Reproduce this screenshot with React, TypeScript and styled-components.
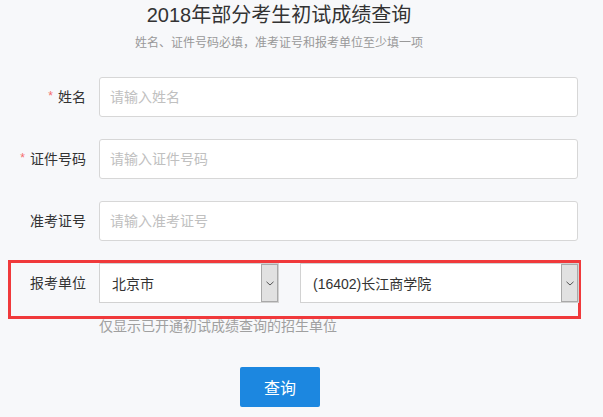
import styled, { createGlobalStyle } from "styled-components";

const GlobalStyle = createGlobalStyle`
  html, body {
    margin: 0;
    padding: 0;
    background: #f7f8fa;
  }
  body {
    font-family: "Liberation Sans", "Noto Sans CJK SC", sans-serif;
    color: #333;
  }
  * {
    box-sizing: border-box;
  }
`;

const Page = styled.div`
  width: 603px;
  height: 417px;
  overflow: hidden;
  background: #f7f8fa;
`;

const Header = styled.div`
  width: 558px;
  text-align: center;
`;

const Title = styled.h1`
  margin: 0;
  font-size: 20px;
  font-weight: 400;
  line-height: 30px;
  color: #333;
`;

const Subtitle = styled.p`
  margin: 4px 0 0 0;
  font-size: 12px;
  line-height: 18px;
  color: #999;
`;

const Form = styled.form`
  margin-top: 25px;
  display: flex;
  flex-direction: column;
  gap: 22px;
`;

const Row = styled.div<{ $labelWidth?: number }>`
  display: flex;
  align-items: center;
  height: 40px;
  gap: 13px;

  & > label {
    flex: 0 0 ${(p) => p.$labelWidth ?? 86}px;
  }
`;

const Label = styled.label`
  text-align: right;
  font-size: 14px;
  line-height: 20px;
  color: #333;
  white-space: nowrap;
`;

const Star = styled.span`
  color: #f56c6c;
  font-size: 12px;
  margin-right: 5px;
  position: relative;
  top: -2px;
`;

const Input = styled.input`
  width: 479px;
  height: 40px;
  padding: 0 10px;
  border: 1px solid #d7d7d7;
  border-radius: 3px;
  background: #fff;
  font-family: inherit;
  font-size: 14px;
  color: #333;
  outline: none;
  &::placeholder {
    color: #c0c0c0;
  }
`;

const UnitGroup = styled.div`
  display: flex;
  flex-direction: column;
`;

const Highlight = styled.div`
  margin: -3px 0 0 8px;
  width: 573px;
  border: 3px solid #f0393b;
  padding-bottom: 13px;
`;

const Fields = styled.div`
  display: flex;
  gap: 21px;
`;

const SelectBox = styled.div<{ $width: number }>`
  width: ${(p) => p.$width}px;
  height: 40px;
  display: flex;
  align-items: stretch;
  border: 1px solid #d2d2d2;
  background: #fff;
  font-size: 14px;
  color: #333;
`;

const SelectValue = styled.span`
  flex: 1;
  display: flex;
  align-items: center;
  padding-left: 12px;
  white-space: nowrap;
`;

const ArrowBox = styled.span`
  flex: 0 0 17px;
  display: flex;
  align-items: center;
  justify-content: center;
  background: #e1e1e1;
  border: 1px solid #a9a9a9;
`;

const Hint = styled.p`
  margin: -1px 0 0 0;
  padding-left: 99px;
  font-size: 14px;
  line-height: 16px;
  color: #a0a0a0;
`;

const ButtonRow = styled.div`
  width: 560px;
  display: flex;
  justify-content: center;
  margin-top: 11px;
`;

const Button = styled.button`
  width: 80px;
  height: 40px;
  border: none;
  border-radius: 2px;
  background: #1c87e0;
  color: #fff;
  font-family: inherit;
  font-size: 16px;
  cursor: pointer;
`;

function Chevron() {
  return (
    <svg width="8" height="5" viewBox="0 0 8 5">
      <path d="M0.5 0.8 L4 4 L7.5 0.8" fill="none" stroke="#555" strokeWidth="1" />
    </svg>
  );
}

export default function App() {
  return (
    <Page>
      <GlobalStyle />
      <Header>
        <Title>2018年部分考生初试成绩查询</Title>
        <Subtitle>姓名、证件号码必填，准考证号和报考单位至少填一项</Subtitle>
      </Header>
      <Form onSubmit={(e) => e.preventDefault()}>
        <Row>
          <Label htmlFor="name">
            <Star>*</Star>姓名
          </Label>
          <Input id="name" placeholder="请输入姓名" />
        </Row>
        <Row>
          <Label htmlFor="idno">
            <Star>*</Star>证件号码
          </Label>
          <Input id="idno" placeholder="请输入证件号码" />
        </Row>
        <Row>
          <Label htmlFor="ticket">准考证号</Label>
          <Input id="ticket" placeholder="请输入准考证号" />
        </Row>
        <UnitGroup>
          <Highlight>
            <Row $labelWidth={75}>
              <Label>报考单位</Label>
              <Fields>
                <SelectBox $width={180}>
                  <SelectValue>北京市</SelectValue>
                  <ArrowBox>
                    <Chevron />
                  </ArrowBox>
                </SelectBox>
                <SelectBox $width={279}>
                  <SelectValue>(16402)长江商学院</SelectValue>
                  <ArrowBox>
                    <Chevron />
                  </ArrowBox>
                </SelectBox>
              </Fields>
            </Row>
          </Highlight>
          <Hint>仅显示已开通初试成绩查询的招生单位</Hint>
        </UnitGroup>
        <ButtonRow>
          <Button type="submit">查询</Button>
        </ButtonRow>
      </Form>
    </Page>
  );
}
